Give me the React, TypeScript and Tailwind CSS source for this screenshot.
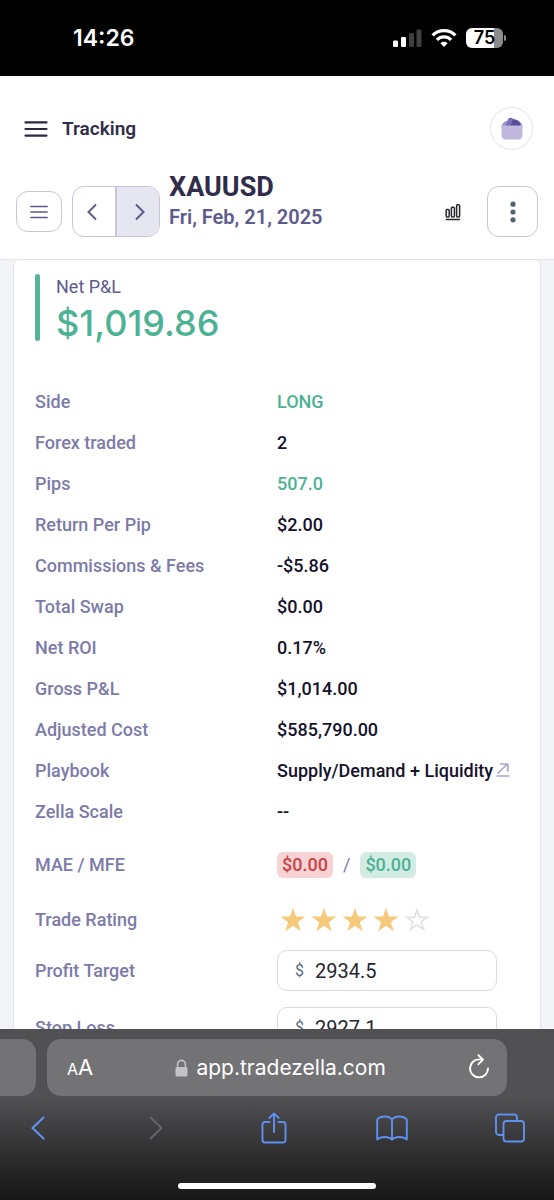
import React from 'react';

interface DetailRowProps {
  label: string;
  children: React.ReactNode;
}

interface PriceRowProps {
  id: string;
  label: string;
  value: string;
}

const stats = [
  { label: 'Side', value: 'LONG', positive: true },
  { label: 'Forex traded', value: '2' },
  { label: 'Pips', value: '507.0', positive: true },
  { label: 'Return Per Pip', value: '$2.00' },
  { label: 'Commissions & Fees', value: '-$5.86' },
  { label: 'Total Swap', value: '$0.00' },
  { label: 'Net ROI', value: '0.17%' },
  { label: 'Gross P&L', value: '$1,014.00' },
  { label: 'Adjusted Cost', value: '$585,790.00' },
];

const StatusBar: React.FC = () => (
  <div className="flex h-[76px] shrink-0 items-center justify-between bg-black pl-[73px] pr-12 font-['Inter',sans-serif] text-white">
    <span className="text-[23px] font-semibold leading-7">14:26</span>
    <div className="flex items-center gap-[9px]">
      <svg width="29" height="20" viewBox="0 0 29 20" aria-hidden="true">
        <rect x="0" y="12.5" width="5" height="6.5" rx="1.2" fill="#fff" />
        <rect x="8" y="9" width="5" height="10" rx="1.2" fill="#fff" />
        <rect x="16" y="5" width="5" height="14" rx="1.2" fill="#404040" />
        <rect x="23.5" y="1.5" width="5" height="17.5" rx="1.2" fill="#404040" />
      </svg>
      <svg width="26" height="20" viewBox="0 0 26 20" fill="none" stroke="#fff" strokeWidth="3.3" aria-hidden="true">
        <path d="M1.6 7.4a16.2 16.2 0 0 1 22.8 0" />
        <path d="M5.9 11.9a10 10 0 0 1 14.2 0" />
        <path d="M13 18.9l-3.6-3.7a5.2 5.2 0 0 1 7.2 0z" fill="#fff" stroke="none" />
      </svg>
      <div className="flex items-center gap-px">
        <div className="flex h-5 w-[37px] items-center justify-center rounded-md bg-linear-to-r from-white from-75% to-[#8c8c8c] to-75%">
          <span className="text-[18px] font-semibold leading-5 text-black">75</span>
        </div>
        <div className="h-[6px] w-[2px] rounded-r-full bg-[#8c8c8c]" />
      </div>
    </div>
  </div>
);

const Header: React.FC = () => (
  <header className="shrink-0 border-b border-[#e3e4ea] bg-white pb-2 pt-[31px]">
    <div className="flex items-center justify-between pl-[23px] pr-[21px]">
      <div className="flex items-center gap-[14px]">
        <button type="button" aria-label="Open menu">
          <svg width="25" height="18" viewBox="0 0 25 18" stroke="#2a2845" strokeWidth="2.2" strokeLinecap="round">
            <path d="M2.500 2.400h21M2.500 9h21M2.500 15.600h21" />
          </svg>
        </button>
        <h1 className="text-[19px] font-semibold leading-7 text-[#2f2d49]">Tracking</h1>
      </div>
      <button type="button" aria-label="Account" className="flex size-[43px] items-center justify-center rounded-full border border-[#e4e2ec]">
        <svg width="22" height="23" viewBox="0 0 22 23">
          <path d="M.5 10C.5 6.500 3.500 4.500 5.500 4h12c2 .8 4 3 4 6z" fill="#9d93ca" />
          <path d="M4.500 9L7 2.300C7.500 1 8.700.5 10 .8l2.500.9L11 9z" fill="#7a6fb5" />
          <path d="M9.500 9L12 2.200c3-.2 6.500 1.800 7.500 5L19 9z" fill="#5a4b98" />
          <path d="M.5 8.500h21v9.500c0 3-2 4.500-4.500 4.500H5C2.500 22.500.5 21 .5 18z" fill="#bfb7dc" />
        </svg>
      </button>
    </div>

    <div className="mt-[22px] flex h-[79px] items-center px-4">
      <button type="button" aria-label="Trade list" className="flex h-[41px] w-[46px] shrink-0 items-center justify-center rounded-xl border border-[#c7c5da]">
        <svg width="18" height="14" viewBox="0 0 18 14" stroke="#5d5a8c" strokeWidth="1.7" strokeLinecap="round">
          <path d="M1 1.500h16M1 7h16M1 12.500h16" />
        </svg>
      </button>
      <div className="ml-[10px] flex h-[51px] w-[88px] shrink-0 overflow-hidden rounded-xl border border-[#c7c5da]">
        <button type="button" aria-label="Previous trade" className="flex flex-1 items-center justify-start border-r-2 border-[#c7c5da] pl-[14px]">
          <svg width="10" height="18" viewBox="0 0 10 18" fill="none" stroke="#5d5a8c" strokeWidth="2">
            <path d="M9 1.500L1.500 9 9 16.500" />
          </svg>
        </button>
        <button type="button" aria-label="Next trade" className="flex flex-1 items-center justify-end bg-[#e6e6f0] pr-[14px]">
          <svg width="10" height="18" viewBox="0 0 10 18" fill="none" stroke="#5d5a8c" strokeWidth="2">
            <path d="M1 1.500L8.500 9 1 16.500" />
          </svg>
        </button>
      </div>
      <div className="ml-[9px] flex-1 self-start whitespace-nowrap">
        <h2 className="text-[27px] font-bold leading-[30px] text-[#2f2d49]">XAUUSD</h2>
        <p className="text-xl font-semibold leading-[30px] text-[#5d5a8c]">Fri, Feb, 21, 2025</p>
      </div>
      <button type="button" aria-label="Show chart">
        <svg width="16" height="18" viewBox="0 0 16 18" fill="none" stroke="#26262c" strokeWidth="1.5">
          <rect x="1.200" y="6.500" width="3" height="7.600" rx="1" />
          <rect x="6.400" y="4.200" width="3" height="9.900" rx="1" />
          <rect x="11.600" y="1.800" width="3" height="12.300" rx="1" />
          <path d="M.8 16.500h14.200" />
        </svg>
      </button>
      <button type="button" aria-label="More actions" className="ml-[26px] flex size-[51px] shrink-0 items-center justify-center rounded-xl border border-[#c7c5da]">
        <svg width="6" height="22" viewBox="0 0 6 22" fill="#53646d">
          <circle cx="3" cy="3.200" r="2.600" />
          <circle cx="3" cy="11" r="2.600" />
          <circle cx="3" cy="18.800" r="2.600" />
        </svg>
      </button>
    </div>
  </header>
);

const DetailRow: React.FC<DetailRowProps> = ({ label, children }) => (
  <div className="flex h-[41px] items-center">
    <dt className="w-[242px] shrink-0 text-[#7c7ba8]">{label}</dt>
    <dd className="flex items-center whitespace-nowrap text-[#15132b]">{children}</dd>
  </div>
);

const PriceRow: React.FC<PriceRowProps> = ({ id, label, value }) => (
  <div className="flex h-[57px] items-center">
    <label htmlFor={id} className="w-[242px] shrink-0 text-[#7c7ba8]">{label}</label>
    <div className="flex h-[41px] w-full max-w-[220px] items-center gap-[11px] rounded-[10px] border border-[#dadbe0] px-[17px] font-normal">
      <span className="text-base text-[#5b6b7b]">$</span>
      <input id={id} type="text" defaultValue={value} className="w-full min-w-0 bg-transparent text-xl text-[#26272e] outline-none" />
    </div>
  </div>
);

const TradeRating: React.FC<{ rating: number }> = ({ rating }) => (
  <div className="flex">
    {[1, 2, 3, 4, 5].map((star) => (
      <button key={star} type="button" aria-label={`Rate ${star} of 5`} className="flex w-[31px] justify-center">
        <svg width="26" height="26" viewBox="0 0 26 26" fill={star <= rating ? '#f5ca7b' : 'none'}>
          {star <= rating ? (
            <path d="M13 .8l3 8.800h9.400l-7.500 5.600 2.800 9-7.700-5.400-7.700 5.400 2.800-9L.6 9.600H10z" />
          ) : (
            <path d="M13 3l2.600 7.300h7.600l-6.100 4.600 2.300 7.400-6.400-4.500-6.400 4.500 2.300-7.400-6.100-4.600h7.600z" stroke="#e2e2e8" strokeWidth="1.800" />
          )}
        </svg>
      </button>
    ))}
  </div>
);

const TradeDetails: React.FC = () => (
  <main className="min-h-0 flex-1 overflow-hidden bg-[#f3f4f7] px-[13px]">
    <section className="rounded-t-md border-x border-[#e2e4ea] bg-white px-[21px] pt-[14px] text-lg font-medium">
      <div className="flex gap-4">
        <div className="h-[67px] w-[5px] rounded-full bg-[#54b399]" />
        <div>
          <p className="font-normal leading-[26px] text-[#5d5a8c]">Net P&L</p>
          <p className="font-['Inter',sans-serif] text-4xl font-medium leading-[46px] text-[#4db294]">$1,019.86</p>
        </div>
      </div>

      <dl className="mt-[35px]">
        {stats.map((stat) => (
          <DetailRow key={stat.label} label={stat.label}>
            <span className={stat.positive ? 'text-[#4db294]' : ''}>{stat.value}</span>
          </DetailRow>
        ))}
        <DetailRow label="Playbook">
          <a href="#playbook" className="flex items-center gap-[3px]">
            Supply/Demand + Liquidity
            <svg width="14" height="16" viewBox="0 0 14 16" fill="none" stroke="#aaa3d0" strokeWidth="1.700">
              <path d="M1.500 10.500L11 1.500M4 1h7.800v7.500M.5 13h13" />
            </svg>
          </a>
        </DetailRow>
        <DetailRow label="Zella Scale">--</DetailRow>
      </dl>

      <div className="flex h-[66px] items-center">
        <span className="w-[242px] shrink-0 text-[#7c7ba8]">MAE / MFE</span>
        <div className="flex items-center gap-[10px]">
          <span className="rounded-md bg-[#f7d3d5] px-[5px] leading-[26px] text-[#cb4246]">$0.00</span>
          <span className="font-normal text-[#7c7ba8]">/</span>
          <span className="rounded-md bg-[#d2ebe3] px-[5px] leading-[26px] text-[#4db294]">$0.00</span>
        </div>
      </div>
      <div className="flex h-11 items-center">
        <span className="w-[242px] shrink-0 text-[#7c7ba8]">Trade Rating</span>
        <TradeRating rating={4} />
      </div>
      <PriceRow id="profit-target" label="Profit Target" value="2934.5" />
      <PriceRow id="stop-loss" label="Stop Loss" value="2927.1" />
    </section>
  </main>
);

const BrowserBar: React.FC = () => (
  <footer className="flex shrink-0 flex-col bg-linear-to-b from-[#515153] from-40% to-[#161617] pt-[10px] font-['Inter',sans-serif]">
    <div className="flex h-[57px] gap-[11px]">
      <div className="w-9 rounded-r-[14px] bg-[#737375]" />
      <div className="flex flex-1 items-center justify-between rounded-[14px] bg-[#737375] pl-5 pr-[17px] text-white">
        <button type="button" aria-label="Page settings" className="flex items-baseline">
          <span className="text-base">A</span>
          <span className="text-[22px]">A</span>
        </button>
        <button type="button" className="flex items-center gap-2">
          <svg width="13" height="18" viewBox="0 0 13 18" aria-hidden="true">
            <path d="M2.600 8.500V5.300a3.900 3.900 0 0 1 7.800 0v3.200" fill="none" stroke="#c3c3c5" strokeWidth="1.600" />
            <rect x=".5" y="8" width="12" height="9.500" rx="1.600" fill="#c3c3c5" />
          </svg>
          <span className="text-[21px] leading-7">app.tradezella.com</span>
        </button>
        <button type="button" aria-label="Reload">
          <svg width="22" height="28" viewBox="0 0 22 28" fill="none" stroke="#fff" strokeWidth="1.900" strokeLinecap="round" strokeLinejoin="round">
            <path d="M14.500 5.400H11a9 9 0 1 0 9 9" />
            <path d="M10.500 1.200L15 5.600l-4.500 4.600" />
          </svg>
        </button>
      </div>
      <div className="w-9" />
    </div>

    <nav className="mt-3 flex items-center justify-between pl-[23px] pr-[29px]">
      <button type="button" aria-label="Back" className="flex h-10 w-[30px] items-center justify-center">
        <svg width="14" height="24" viewBox="0 0 14 24" fill="none" stroke="#5f8ff0" strokeWidth="2.200" strokeLinecap="round" strokeLinejoin="round">
          <path d="M12.500 1.500L1.500 12l11 10.500" />
        </svg>
      </button>
      <button type="button" aria-label="Forward" className="flex h-10 w-[30px] items-center justify-center">
        <svg width="14" height="24" viewBox="0 0 14 24" fill="none" stroke="#646466" strokeWidth="2" strokeLinecap="round" strokeLinejoin="round">
          <path d="M1.500 1.500L12.500 12l-11 10.500" />
        </svg>
      </button>
      <button type="button" aria-label="Share" className="flex h-10 w-[30px] items-center justify-center">
        <svg width="26" height="32" viewBox="0 0 26 32" fill="none" stroke="#5f8ff0" strokeWidth="1.900" strokeLinecap="round" strokeLinejoin="round">
          <path d="M8.500 10H4a2.500 2.500 0 0 0-2.500 2.500v15.500A2.500 2.500 0 0 0 4 30.500h18a2.500 2.500 0 0 0 2.500-2.500V12.500A2.500 2.500 0 0 0 22 10h-4.500" />
          <path d="M13 20V1.500M8.300 6L13 1.300 17.700 6" />
        </svg>
      </button>
      <button type="button" aria-label="Bookmarks" className="flex h-10 w-[30px] items-center justify-center">
        <svg width="32" height="26" viewBox="0 0 32 26" className="shrink-0" fill="none" stroke="#5f8ff0" strokeWidth="1.900" strokeLinejoin="round">
          <path d="M16 4.500C13 .6 4.500.4 1.200 4.500v20c3.500-3.300 11.500-3.300 14.800 0 3.300-3.300 11.300-3.300 14.800 0v-20C27.500.4 19 .6 16 4.500zM16 4.500v20" />
        </svg>
      </button>
      <button type="button" aria-label="Tabs" className="flex h-10 w-[30px] items-center justify-center">
        <svg width="30" height="30" viewBox="0 0 30 30" fill="none" stroke="#5f8ff0" strokeWidth="1.900">
          <rect x="8.500" y="8" width="20.500" height="20.500" rx="3" />
          <path d="M8.500 22H4a3 3 0 0 1-3-3V4.500a3 3 0 0 1 3-3h15a3 3 0 0 1 3 3V8" />
        </svg>
      </button>
    </nav>

    <div className="mb-[11px] mt-[35px] h-[6px] w-[198px] self-center rounded-full bg-white" />
  </footer>
);

const App: React.FC = () => {
  return (
    <div className="flex h-screen flex-col overflow-hidden bg-white font-['Roboto',sans-serif]">
      <StatusBar />
      <Header />
      <TradeDetails />
      <BrowserBar />
    </div>
  );
};

export default App;
